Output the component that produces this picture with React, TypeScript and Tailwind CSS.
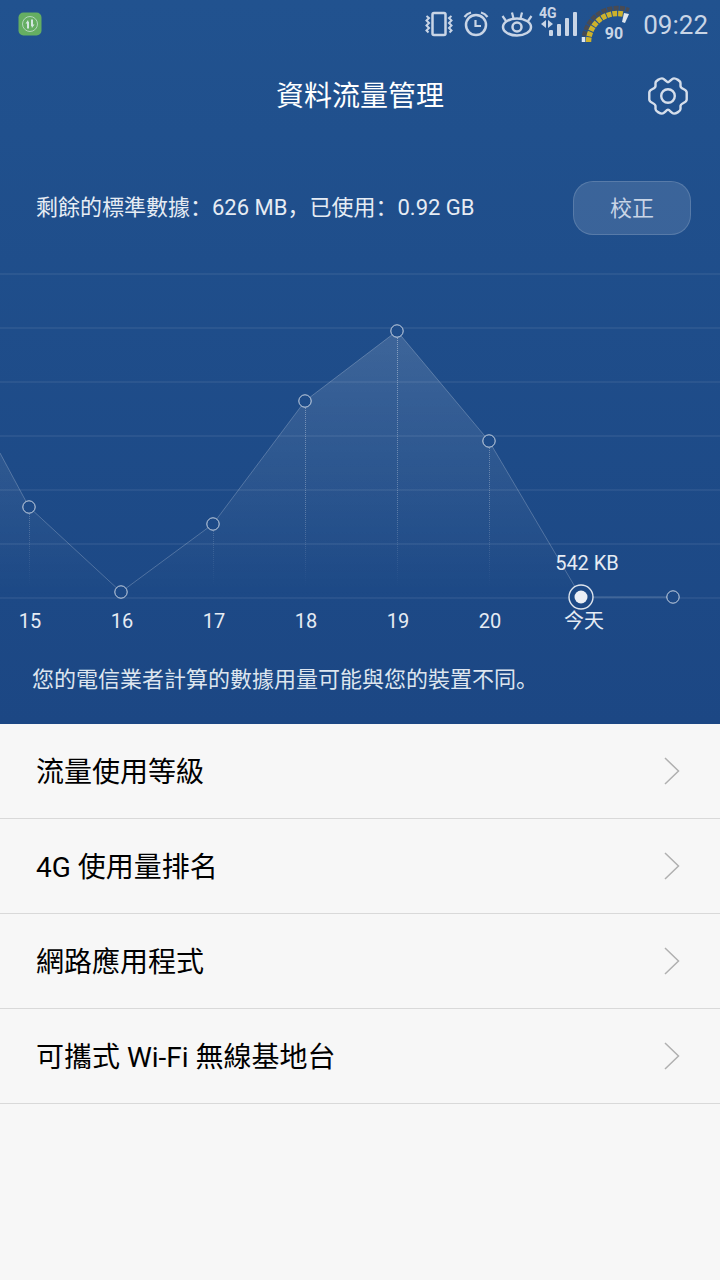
import { useState } from "react";

const FONT = "font-[Roboto,'Noto_Sans_CJK_SC',sans-serif]";

// chart space is 720 x 400, baseline at y = 348
const BASE = 348;
const GRID = [24, 78, 132, 186, 240, 294, BASE];

const days = [
    { label: "15", x: 29, y: 257 },
    { label: "16", x: 121, y: 342 },
    { label: "17", x: 213, y: 274 },
    { label: "18", x: 305, y: 151 },
    { label: "19", x: 397, y: 81 },
    { label: "20", x: 489, y: 191 },
    { label: "今天", x: 581, y: 347, value: "542 KB" },
    { label: "", x: 673, y: 347 },
];

const menu = [
    { id: "level", label: "流量使用等級" },
    { id: "ranking", label: "4G 使用量排名" },
    { id: "apps", label: "網路應用程式" },
    { id: "hotspot", label: "可攜式 Wi-Fi 無線基地台" },
];

function TrafficIcon() {
    return (
        <svg width="24" height="24" viewBox="0 0 24 24" fill="none">
            <rect x="0.5" y="0.5" width="23" height="23" rx="5" fill="#65ae62" />
            <circle cx="12" cy="12" r="7.5" stroke="#b4d6bd" strokeWidth="1" />
            <path d="M10 16.5V10M14 7.5V14" stroke="#d3e6e0" strokeWidth="2" />
            <path d="M7.5 11.5 10 8l1 3.5zM16.5 12.5 14 16l-1-3.5z" fill="#d3e6e0" />
        </svg>
    );
}

function VibrateIcon() {
    return (
        <svg width="28" height="26" viewBox="0 0 28 26" fill="none" stroke="#c9d5e6">
            <rect x="7.5" y="2" width="13" height="22" rx="1.5" strokeWidth="2.5" />
            <path d="M1.5 5 4 7 1.5 9.5 4 12 1.5 14.5 4 17 1.5 19.5 3.5 21.5M26.5 5 24 7l2.5 2.5L24 12l2.5 2.5L24 17l2.5 2.5-2 2" strokeWidth="2" />
        </svg>
    );
}

function AlarmIcon() {
    return (
        <svg width="26" height="26" viewBox="0 0 26 26" fill="none" stroke="#c9d5e6">
            <circle cx="13" cy="14" r="10" strokeWidth="2.5" />
            <path d="M12.5 9v6h5.5" strokeWidth="2.2" />
            <path d="M1.5 6Q4 2.5 8 1.5M24.5 6Q22 2.5 18 1.5" strokeWidth="2.2" />
        </svg>
    );
}

function EyeIcon() {
    return (
        <svg width="32" height="26" viewBox="0 0 32 26" fill="none" stroke="#c9d5e6">
            <ellipse cx="16" cy="16" rx="14" ry="8.5" strokeWidth="2.5" />
            <circle cx="16" cy="16" r="4.5" strokeWidth="2.5" />
            <path d="M5 10 1.5 5M12.5 7.5 11 1.5M19.5 7.5 21 1.5M27 10l3.5-5" strokeWidth="2.2" />
        </svg>
    );
}

function SignalIcon() {
    return (
        <svg width="40" height="36" viewBox="0 0 40 36" fill="#c9d5e6">
            <text x="0" y="12" className="text-[14px] font-bold">4G</text>
            <path d="M2 18 7 14v8zM14 18 9 14v8z" />
            <rect x="10" y="24" width="4" height="6" rx="1" />
            <rect x="18" y="18" width="4" height="12" rx="1" />
            <rect x="26" y="12" width="4" height="18" rx="1" />
            <rect x="34" y="6" width="4" height="24" rx="1" />
        </svg>
    );
}

function BatteryGauge() {
    return (
        <svg width="50" height="38" viewBox="0 0 50 38" fill="none">
            <path d="M3 31A34 34 0 0 1 48 5" stroke="#484b54" strokeWidth="4.5" strokeDasharray="5 1.2" />
            <path d="M7.5 37A29 29 0 0 1 42 9" stroke="#cdb22c" strokeWidth="5.5" strokeDasharray="4.7 1" />
            <path d="M2.5 32V37" stroke="#dfe6ef" strokeWidth="3.5" />
            <path d="M43 8l5 1-4 9-3-1z" fill="#dfe6ef" />
            <text x="33" y="34" textAnchor="middle" fill="#c9d5e6" className="text-[16px] font-bold">90</text>
        </svg>
    );
}

function GearIcon() {
    return (
        <svg width="40" height="40" viewBox="0 0 40 40" fill="none" stroke="#d5deeb" strokeWidth="2.4" strokeLinejoin="round">
            <path d="M20 6.2C18 6.2 16.5 2.4 14 2.4C12 2.4 7.5 4.8 7.5 7V10C7.500 13.300 1.300 12.800 1.300 16.500V23.500C1.300 27.200 7.500 26.700 7.500 30V33C7.500 35.200 12 37.600 14 37.600C16.500 37.600 18 33.800 20 33.800C22 33.800 23.500 37.600 26 37.600C28 37.600 32.500 35.200 32.500 33V30C32.500 26.700 38.700 27.200 38.700 23.500V16.500C38.700 12.800 32.500 13.300 32.500 10V7C32.500 4.800 28 2.400 26 2.400C23.500 2.400 22 6.200 20 6.200Z" />
            <circle cx="20" cy="20" r="6.8" />
        </svg>
    );
}

function UsageChart() {
    const line = "0,203 " + days.map((d) => `${d.x},${d.y}`).join(" ");
    return (
        <svg className="block w-full" viewBox="0 0 720 400" role="img" aria-label="每日流量">
            <defs>
                <linearGradient id="area" gradientUnits="userSpaceOnUse" x1="0" y1="81" x2="0" y2={BASE}>
                    <stop offset="0" stopColor="#fff" stopOpacity="0.14" />
                    <stop offset="1" stopColor="#fff" stopOpacity="0" />
                </linearGradient>
                <linearGradient id="drop" gradientUnits="userSpaceOnUse" x1="0" y1="81" x2="0" y2="336">
                    <stop offset="0" stopColor="#fff" stopOpacity="0.4" />
                    <stop offset="0.7" stopColor="#fff" stopOpacity="0.25" />
                    <stop offset="1" stopColor="#fff" stopOpacity="0" />
                </linearGradient>
                <mask id="outside" maskUnits="userSpaceOnUse" x="0" y="0" width="720" height="400">
                    <rect width="720" height="400" fill="#fff" />
                    {days.map((d) => (
                        <circle key={d.x} cx={d.x} cy={d.y} r={d.value ? 12 : 6} fill="#000" />
                    ))}
                </mask>
            </defs>
            <g mask="url(#outside)">
                {GRID.map((y) => (
                    <rect key={y} x="0" y={y - 1} width="720" height="2" fill="#fff" fillOpacity="0.06" />
                ))}
                <polygon points={`${line} 673,${BASE} 0,${BASE}`} fill="url(#area)" />
                <polyline points={line} fill="none" stroke="#fff" strokeOpacity="0.22" />
                {days.filter((d) => d.y < 330).map((d) => (
                    <path key={d.x} d={`M${d.x + 0.5} ${d.y + 7}V336`} stroke="url(#drop)" strokeDasharray="1 1" />
                ))}
            </g>
            {days.map((d) => (
                <g key={d.x} fill="none" stroke="#fff">
                    {d.value ? (
                        <>
                            <circle cx={d.x} cy={d.y} r="12" strokeOpacity="0.85" strokeWidth="1.4" />
                            <circle cx={d.x} cy={d.y} r="6.5" fill="#ebeff6" stroke="none" />
                        </>
                    ) : (
                        <circle cx={d.x} cy={d.y} r="6.2" strokeOpacity="0.75" />
                    )}
                </g>
            ))}
            <g fill="#e6ecf4" textAnchor="middle" className="text-[20px]">
                {days.map((d) => (
                    <text key={d.x} x={d.x + (d.value ? 3 : 1)} y="378">{d.label}</text>
                ))}
                {days.filter((d) => d.value).map((d) => (
                    <text key={d.x} x={d.x + 6} y="320">{d.value}</text>
                ))}
            </g>
        </svg>
    );
}

export default function App() {
    const [selected, setSelected] = useState("");

    return (
        <div className={`${FONT} min-h-screen bg-[#f7f7f7]`} lang="zh-Hans">
            <header className="bg-linear-to-b from-[#21528f] to-[#1c4784]">
                <div className="flex h-12 items-center pr-3 pl-[18px]">
                    <TrafficIcon />
                    <div className="ml-auto flex items-center">
                        <VibrateIcon />
                        <span className="ml-2.5"><AlarmIcon /></span>
                        <span className="ml-3"><EyeIcon /></span>
                        <span className="ml-1.5"><SignalIcon /></span>
                        <span className="ml-0.5"><BatteryGauge /></span>
                        <time className="ml-3 pt-0.5 text-[26px] leading-8 text-[#c9d5e6]">09:22</time>
                    </div>
                </div>

                <div className="grid h-24 grid-cols-[1fr_auto_1fr] items-center px-8">
                    <h1 className="col-start-2 pt-0.5 text-[28px] leading-10 text-white">資料流量管理</h1>
                    <button className="justify-self-end" aria-label="設定">
                        <GearIcon />
                    </button>
                </div>

                <div className="flex h-[106px] items-center justify-between pt-[22px] pr-[29px] pl-9">
                    <p className="text-[22px] leading-8 text-[#e6ecf4]">剩餘的標準數據：626 MB，已使用：0.92 GB</p>
                    <button className="h-[54px] w-[118px] rounded-[20px] border border-white/15 bg-white/12 text-[22px] text-[#c9d5e6]">
                        校正
                    </button>
                </div>

                <UsageChart />

                <p className="h-[74px] px-8 pt-3 text-[22px] leading-9 text-[#dde5ef]">您的電信業者計算的數據用量可能與您的裝置不同。</p>
            </header>

            <nav>
                {menu.map((item) => (
                    <a
                        key={item.id}
                        href={`#${item.id}`}
                        onClick={() => setSelected(item.id)}
                        aria-current={selected === item.id ? "page" : undefined}
                        className="flex h-[95px] items-center justify-between border-b border-[#d9d9d9] pr-10 pl-9 text-[28px] text-black"
                    >
                        <span className="pt-1">{item.label}</span>
                        <svg width="16" height="28" viewBox="0 0 16 28" fill="none" stroke="#b0b0b0" strokeWidth="1.5">
                            <path d="M1 1l13.5 13L1 27" />
                        </svg>
                    </a>
                ))}
            </nav>
        </div>
    );
}
